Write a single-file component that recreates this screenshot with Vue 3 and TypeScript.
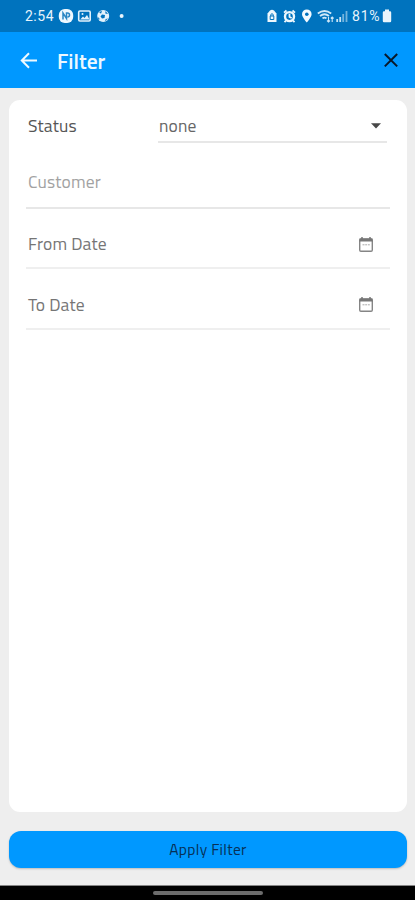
<script setup lang="ts">
import { ref } from 'vue'

interface DateField {
  label: string
}

const status = ref<string>('none')
const dateFields: DateField[] = [{ label: 'From Date' }, { label: 'To Date' }]
</script>

<template>
  <div class="screen">
    <div class="status-bar">
      <span class="time">2:54</span>
      <svg class="notices" width="72" height="16" viewBox="0 0 72 16" aria-hidden="true">
        <rect x="0.8" y="1" width="14.4" height="14" rx="6" fill="#eef8ff" />
        <path d="M5 11.5V5L8.5 10.5V5H9.5A2 2 0 0 1 9.5 9" fill="none" stroke="#2a86c4" stroke-width="1.5" />
        <rect x="20.7" y="3" width="11.5" height="10" rx="1.2" fill="none" stroke="#e2f2fc" stroke-width="1.6" />
        <path d="M22.2 11.5L25 8.5L26.5 10L29 7L31.5 11.5Z" fill="#e2f2fc" />
        <circle cx="24.5" cy="6" r="1" fill="#e2f2fc" />
        <circle cx="45.2" cy="8" r="6" fill="#e2f2fc" />
        <path d="M44 6.5L47 7L46.5 10L44 10.5L42.5 8.5ZM39.3 8.5L41.5 10.5L41 12.5ZM47.5 3L50 6L47.3 5.5ZM46.8 12L49.8 10L48 13ZM41 4L44 3L43 5.7Z" fill="#0072bd" />
        <circle cx="63.6" cy="8" r="2" fill="#e8f5fd" />
      </svg>
      <svg class="signals" width="84" height="16" viewBox="0 0 84 16" aria-hidden="true">
        <path d="M1.5 5.5L4 2.5Q6 1 8 2.5L10.5 5.5V14H1.5Z" fill="#edf7fd" />
        <path d="M4.2 8H7.8V11.5H4.2ZM4.8 8V6.5Q6 4.8 7.2 6.5V8" fill="none" stroke="#0072bd" />
        <circle cx="23.5" cy="8.6" r="4.5" fill="none" stroke="#edf7fd" stroke-width="2.4" />
        <path d="M18 4.6L20.5 2.5M26.5 2.5L29 4.6M20 12.5L18.5 14.2M27 12.5L28.5 14.2M23.5 5.8V9L25.7 10" fill="none" stroke="#edf7fd" stroke-width="1.8" />
        <path d="M36 6.2A4.8 4.8 0 0 1 45.6 6.2C45.6 9 40.8 14.5 40.8 14.5S36 9 36 6.2Z" fill="#f3faff" />
        <circle cx="40.8" cy="6.3" r="1.8" fill="#0072bd" />
        <path d="M51.8 5.5Q58.5 0.5 65.2 5.5M54 8Q58.5 4.5 63 8M56.5 10.4Q58.5 8.8 60.5 10.4" fill="none" stroke="#d0e8f8" stroke-width="1.8" />
        <path d="M62.5 9V14M61 12.5L62.5 14L64 12.5M66.2 14V9M64.8 10.5L66.2 9L67.6 10.5" fill="none" stroke="#d0e8f8" stroke-width="1.1" />
        <path d="M71.2 14V11M74.2 14V9" stroke="#c7e4f6" stroke-width="1.8" />
        <path d="M77.2 14V6M80.5 14V3" stroke="#74b4dd" stroke-width="1.8" />
      </svg>
      <span class="charge">81%</span>
      <svg class="battery" width="10" height="14" viewBox="0 0 10 14" aria-hidden="true">
        <path d="M3 0.5H7V2.3H8Q9.2 2.3 9.2 3.5V12Q9.2 13.2 8 13.2H2Q0.8 13.2 0.8 12V3.5Q0.8 2.3 2 2.3H3Z" fill="#eaf5fc" />
      </svg>
    </div>

    <header class="app-bar">
      <button class="icon-button" aria-label="Back">
        <svg width="18" height="18" viewBox="0 0 18 18">
          <path d="M17 8.5H2M9 1.3L1.8 8.5L9 15.7" fill="none" stroke="#eff9ff" stroke-width="2" />
        </svg>
      </button>
      <h1>Filter</h1>
      <button class="icon-button close" aria-label="Close">
        <svg width="16" height="16" viewBox="0 0 16 16">
          <path d="M1.8 1L14.2 13.4M14.2 1L1.8 13.4" fill="none" stroke="#08192a" stroke-width="2" />
        </svg>
      </button>
    </header>

    <main class="content">
      <section class="card">
        <div class="status-row">
          <span class="label">Status</span>
          <div class="select">
            <span>{{ status }}</span>
            <svg width="10" height="6" viewBox="0 0 10 6"><path d="M0 0.3H10L5 5.6Z" fill="#484848" /></svg>
          </div>
        </div>
        <div class="customer">Customer</div>
        <div v-for="field in dateFields" :key="field.label" class="date-field">
          <span>{{ field.label }}</span>
          <svg width="16" height="17" viewBox="0 0 16 17">
            <rect x="1.7" y="3" width="12.6" height="12.3" rx="1.2" fill="none" stroke="#858585" stroke-width="1.4" />
            <path d="M1.5 4H14.5" stroke="#777" stroke-width="3" />
            <path d="M4 1V4M12 1V4" stroke="#777" stroke-width="1.5" />
            <path d="M4.5 8.8H6.5M7.2 8.8H9M9.8 8.8H11.8" stroke="#aaa" />
          </svg>
        </div>
      </section>
      <button class="apply">Apply Filter</button>
    </main>

    <div class="nav-bar"><span class="handle"></span></div>
  </div>
</template>

<style>
body {
  margin: 0;
  background: #eeedee;
}
</style>

<style scoped>
.screen {
  display: flex;
  flex-direction: column;
  height: 900px;
  background: #eee;
  font-family: "Titillium Web", "Noto Sans", sans-serif;
}
button {
  border: 0;
  font: inherit;
}
svg {
  display: block;
  flex: none;
}
.status-bar {
  display: flex;
  align-items: center;
  flex: none;
  box-sizing: border-box;
  height: 32px;
  padding-left: 25px;
  background: #0073be;
  color: #e7f4fc;
  font: 14px/16px Roboto, sans-serif;
}
.time {
  width: 33px;
  letter-spacing: 0.5px;
}
.signals {
  margin-left: 136px;
}
.charge {
  width: 30px;
  margin-left: 2px;
  letter-spacing: 0.8px;
  white-space: nowrap;
}
.app-bar {
  display: flex;
  align-items: center;
  flex: none;
  box-sizing: border-box;
  height: 56px;
  padding: 1px 16px 0 20px;
  background: #0098ff;
}
.icon-button {
  padding: 0;
  background: none;
}
h1 {
  margin: 0 0 0 19px;
  color: #edf8ff;
  font-size: 21.5px;
  line-height: 28px;
  font-weight: 600;
}
.close {
  margin-left: auto;
}
.content {
  display: flex;
  flex-direction: column;
  flex: 1;
  gap: 19px;
  padding: 12px 8px 17px 9px;
}
.card {
  flex: 1;
  box-sizing: border-box;
  padding: 10px 17px 0;
  border-radius: 11px;
  background: #fff;
  color: #757575;
  font-size: 17.5px;
  line-height: 22px;
  letter-spacing: 0.15px;
}
.status-row {
  display: flex;
  height: 33px;
}
.label {
  width: 130px;
  padding: 5px 0 0 2px;
  color: #555;
}
.select {
  display: flex;
  align-items: center;
  justify-content: space-between;
  box-sizing: border-box;
  width: 229px;
  padding: 0 6px 0 1px;
  border-bottom: 2px solid #e7e7e7;
  color: #666;
}
.customer {
  box-sizing: border-box;
  height: 66px;
  padding: 28px 2px 0;
  border-bottom: 2px solid #e7e7e7;
  color: #a2a2a2;
}
.date-field {
  display: flex;
  align-items: center;
  justify-content: space-between;
  box-sizing: border-box;
  height: 60px;
  padding: 12px 16px 0 2px;
  border-bottom: 2px solid #efefef;
}
.date-field:last-child {
  height: 61px;
}
.apply {
  flex: none;
  height: 37px;
  padding: 0 0 2px;
  border-radius: 12px;
  background: #0098ff;
  box-shadow: 0 1px 2px #bbb;
  color: #073056;
  font-size: 15.5px;
  letter-spacing: 0.3px;
  font-weight: 500;
}
.nav-bar {
  display: flex;
  align-items: center;
  justify-content: center;
  flex: none;
  box-sizing: border-box;
  height: 15px;
  border-top: 1px solid #858585;
  background: #000;
}
.handle {
  width: 110px;
  height: 4px;
  border-radius: 2px;
  background: #6c6c6c;
}
</style>
